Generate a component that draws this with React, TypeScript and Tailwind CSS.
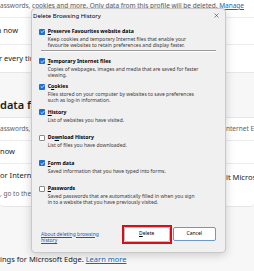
import type { ReactNode } from 'react';

function Box({ checked }: { checked: boolean }) {
  if (!checked) {
    return <span className="block h-[6px] w-[6px] shrink-0 rounded-[1px] border border-[#8a8a8a] bg-white" />;
  }
  return (
    <span className="flex h-[6px] w-[6px] shrink-0 items-center justify-center rounded-[1px] bg-[#1b6fd1]">
      <svg viewBox="0 0 10 10" className="h-[5px] w-[5px]">
        <path d="M2 5.2 L4.2 7.3 L8 2.8" fill="none" stroke="white" strokeWidth="1.6" strokeLinecap="round" strokeLinejoin="round" />
      </svg>
    </span>
  );
}

function Option({ checked, label, desc }: { checked: boolean; label: ReactNode; desc: ReactNode }) {
  return (
    <div className="h-[25.5px]">
      <div className="flex h-[7.5px] items-center gap-[2.7px]">
        <Box checked={checked} />
        <span className="whitespace-nowrap text-[5.2px] font-bold leading-none text-black">{label}</span>
      </div>
      <p className="mt-[0.5px] whitespace-nowrap pl-[8.7px] text-[5px] leading-[6.4px] text-[#3a3a3a]">{desc}</p>
    </div>
  );
}

export default function App() {
  return (
    <div className="relative h-[271px] w-[254px] overflow-hidden bg-[#f7f7f7] font-['Noto_Sans',sans-serif] text-[#1b1b1b]">
      {/* settings page behind the dialog */}
      <div className="border-b border-[#e6e6e6] bg-white">
        <div className="flex h-[18px] items-start border-b border-[#ececec] pt-[1px]">
          <p className="whitespace-nowrap text-[6.5px] leading-[9px] text-[#616161]">
            asswords, cookies and more. Only data from this profile will be deleted. <span className="text-[#0f6cbd] underline">Manage</span>
          </p>
        </div>
        <div className="flex h-[27px] items-center border-b border-[#ececec]">
          <p className="-ml-[3px] whitespace-nowrap text-[7.5px]">a now</p>
        </div>
        <div className="flex h-[27px] items-center">
          <p className="-ml-[1px] whitespace-nowrap text-[7.5px]">r every time you close the browser</p>
        </div>
      </div>

      <h2 className="mt-[25px] mb-[5px] whitespace-nowrap text-[11px] font-semibold leading-[14px]">data for Internet Explorer</h2>

      <div className="rounded-b-[4px] border-y border-[#e6e6e6] bg-white">
        <div className="flex h-[23px] items-center border-b border-[#ececec]">
          <p className="w-[226px] shrink-0 whitespace-nowrap text-[6.5px] text-[#616161]">asswords,</p>
          <p className="whitespace-nowrap text-[6.5px] text-[#616161]">nternet Explorer</p>
        </div>
        <div className="flex h-[23px] items-center border-b border-[#ececec]">
          <p className="whitespace-nowrap text-[7.5px]">now</p>
        </div>
        <div className="flex h-[42px] items-start pt-[6px]">
          <div className="w-[226px] shrink-0">
            <p className="whitespace-nowrap text-[7.5px] leading-[10px]">or Internet Explorer</p>
            <p className="mt-[9px] whitespace-nowrap text-[6.5px] leading-[9px] text-[#616161]">, go to the</p>
          </div>
          <p className="mt-[2px] whitespace-nowrap text-[7.5px] leading-[10px]">it Microsoft Edge</p>
        </div>
      </div>

      <p className="mt-[47px] whitespace-nowrap text-[7.5px] leading-[10px]">
        ings for Microsoft Edge. <span className="text-[#0f6cbd] underline">Learn more</span>
      </p>

      {/* Delete Browsing History dialog */}
      <div className="absolute left-[30.5px] top-[8px] flex h-[245px] w-[195px] flex-col rounded-[4px] border border-[#c9c9c9] bg-[#f0f0f0] shadow-[0_2px_10px_rgba(0,0,0,0.18)]">
        <div className="flex h-[13px] items-center justify-between pl-[1.5px] pr-[6px]">
          <span className="text-[6px] leading-none text-black">Delete Browsing History</span>
          <svg viewBox="0 0 10 10" className="h-[5px] w-[5px]">
            <path d="M1 1 L9 9 M9 1 L1 9" stroke="#222" strokeWidth="1" />
          </svg>
        </div>

        <div className="flex flex-1 flex-col pl-[7.5px] pr-[8.5px] pt-[6px]">
          <Option
            checked
            label={<><u>P</u>reserve Favourites website data</>}
            desc={<>Keep cookies and temporary Internet files that enable your<br />favourite websites to retain preferences and display faster.</>}
          />
          <div className="-mt-[4px] mb-[7px] ml-[2px] border-t border-[#9a9a9a] shadow-[0_1px_0_#ffffff]" />
          <Option
            checked
            label={<><u>T</u>emporary Internet files</>}
            desc={<>Copies of webpages, images and media that are saved for faster<br />viewing.</>}
          />
          <Option
            checked
            label={<>C<u>o</u>okies</>}
            desc={<>Files stored on your computer by websites to save preferences<br />such as log-in information.</>}
          />
          <Option checked label={<><u>H</u>istory</>} desc="List of websites you have visited." />
          <Option checked={false} label={<>Do<u>w</u>nload History</>} desc="List of files you have downloaded." />
          <Option checked label={<><u>F</u>orm data</>} desc="Saved information that you have typed into forms." />
          <Option
            checked={false}
            label={<><u>P</u>asswords</>}
            desc={<>Saved passwords that are automatically filled in when you sign<br />in to a website that you have previously visited.</>}
          />

          <div className="mt-[14px] flex items-start">
            <p className="ml-[2px] mt-[6px] w-[82px] text-[5px] leading-[6.7px] text-[#0a5fc4] underline">
              About deleting browsing<br />history
            </p>
            <div className="border-2 border-[#d1121b]">
              <button className="flex h-[15px] w-[46px] items-center justify-center rounded-[2px] border border-[#bdbdbd] bg-white text-[5px] text-black">
                <span><u>D</u>elete</span>
              </button>
            </div>
            <button className="ml-[1px] mt-[2px] flex h-[14.5px] w-[44px] items-center justify-center rounded-[2px] border border-[#6f97c9] bg-white text-[5px] text-black">
              Cancel
            </button>
          </div>
        </div>
      </div>
    </div>
  );
}
